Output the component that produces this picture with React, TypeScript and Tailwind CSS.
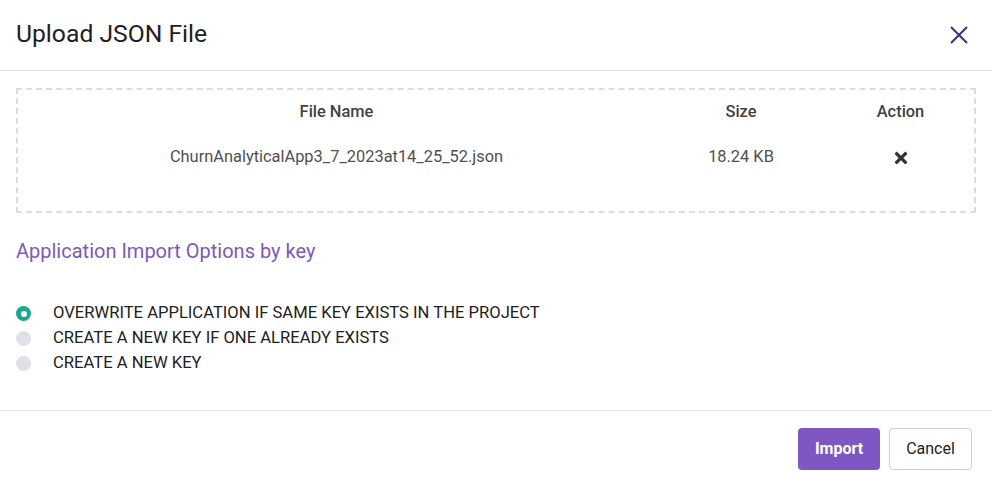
import { FaTimes } from 'react-icons/fa';

const options = [
  'OVERWRITE APPLICATION IF SAME KEY EXISTS IN THE PROJECT',
  'CREATE A NEW KEY IF ONE ALREADY EXISTS',
  'CREATE A NEW KEY',
];

export default function App() {
  const selected = 0;

  return (
    <div className="w-[992px] h-[482px] bg-white flex flex-col font-['Roboto',sans-serif] text-[#212121]">
      <header className="h-[71px] shrink-0 flex items-center justify-between pl-4 pr-[23px] border-b border-[#e4e4e4]">
        <h1 className="text-[24.7px] font-normal text-[#212121] leading-none -mt-[1px]">Upload JSON File</h1>
        <button className="w-5 h-5 flex items-center justify-center text-[#3d2b8e]" aria-label="Close">
          <svg width="20" height="20" viewBox="0 0 20 20" fill="none" stroke="currentColor" strokeWidth="2">
            <path d="M2 2 L18 18 M18 2 L2 18" />
          </svg>
        </button>
      </header>

      <main className="flex-1 px-4 pt-[17px]">
        <div className="h-[125px] border-2 border-dashed border-[#dcdcdc] flex flex-col">
          <div className="flex h-[45px] items-center text-[16.4px] font-medium text-[#424242]">
            <div className="w-[637px] text-center">File Name</div>
            <div className="w-[172px] text-center">Size</div>
            <div className="flex-1 text-center">Action</div>
          </div>
          <div className="flex h-[45px] items-center text-[16.4px] text-[#505050]">
            <div className="w-[637px] text-center">ChurnAnalyticalApp3_7_2023at14_25_52.json</div>
            <div className="w-[172px] text-center">18.24 KB</div>
            <div className="flex-1 flex justify-center">
              <FaTimes className="text-[#333] w-[16px] h-[18px]" />
            </div>
          </div>
        </div>

        <h2 className="mt-[28px] text-[20px] font-normal text-[#7e57c2] leading-none">Application Import Options by key</h2>

        <div className="mt-[40px] flex flex-col">
          {options.map((label, i) => (
            <label key={label} className="flex items-center h-[25px] text-[16.6px] text-[#212121] cursor-pointer">
              <span
                className={
                  i === selected
                    ? 'w-[15px] h-[15px] rounded-full bg-[#1aa88e] flex items-center justify-center'
                    : 'w-[15px] h-[15px] rounded-full bg-[#dfe1e6]'
                }
              >
                {i === selected && <span className="w-[6px] h-[6px] rounded-full bg-white" />}
              </span>
              <span className="ml-[22px]">{label}</span>
            </label>
          ))}
        </div>
      </main>

      <footer className="h-[72px] shrink-0 border-t border-[#e4e4e4] flex items-start justify-end gap-[9px] pt-[17px] pr-[20px]">
        <button className="w-[82px] h-[42px] rounded-[4px] bg-[#7e57c2] text-white text-[16px] font-bold">Import</button>
        <button className="w-[83px] h-[42px] rounded-[4px] bg-white border border-[#cfcfcf] text-[#212121] text-[16px]">Cancel</button>
      </footer>
    </div>
  );
}
